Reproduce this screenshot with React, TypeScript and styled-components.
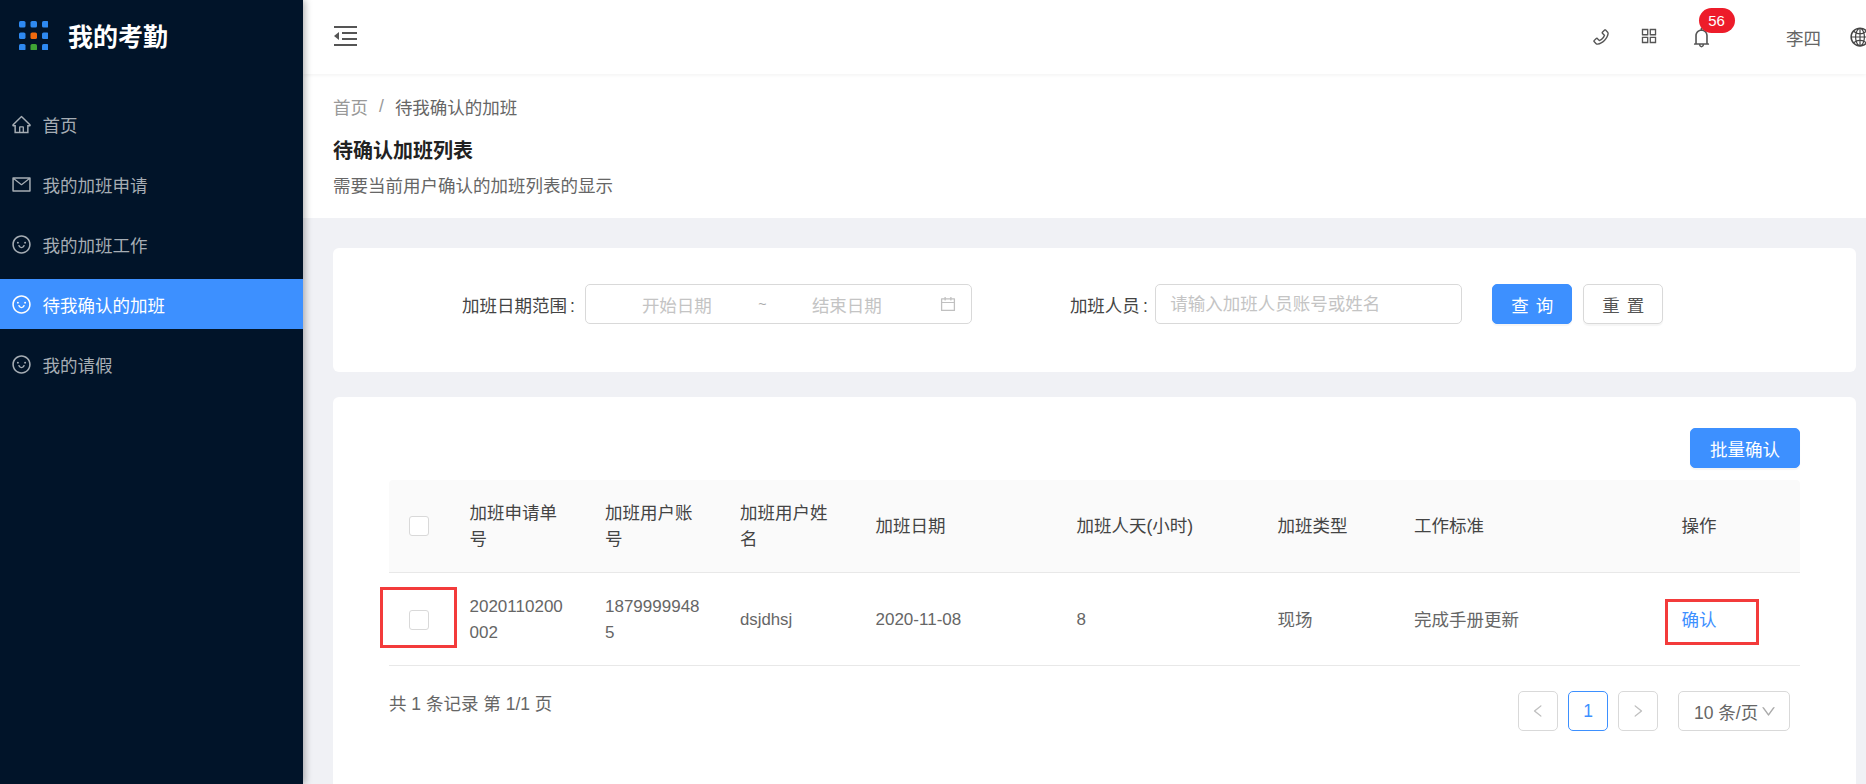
import React from "react";
import styled, { createGlobalStyle } from "styled-components";
import {
  AiOutlineAppstore,
  AiOutlineBell,
  AiOutlineCalendar,
  AiOutlineDown,
  AiOutlineGlobal,
  AiOutlineHome,
  AiOutlineLeft,
  AiOutlineMail,
  AiOutlinePhone,
  AiOutlineRight,
  AiOutlineSmile,
} from "react-icons/ai";

const FONT = `"Liberation Sans", "Noto Sans CJK SC", sans-serif`;
const BLUE = "#3d90ff";

const Global = createGlobalStyle`
  html, body { margin: 0; padding: 0; height: 100%; overflow: hidden; }
  body { font-family: ${FONT}; font-size: 17.5px; color: #666; background: #f0f1f5; }
  * { box-sizing: border-box; }
`;

const Shell = styled.div`
  display: flex;
  width: 1866px;
  height: 784px;
  overflow: hidden;
`;

const Sidebar = styled.aside`
  flex: 0 0 303px;
  background: #011429;
  box-shadow: 2px 0 7px rgba(0, 0, 0, 0.3);
  position: relative;
  z-index: 2;
`;

const Brand = styled.div`
  display: flex;
  align-items: center;
  height: 70px;
  padding-left: 18px;
  gap: 20px;
`;

const BrandTitle = styled.span`
  font-size: 25px;
  font-weight: 700;
  color: #fff;
`;

const Menu = styled.nav`
  display: flex;
  flex-direction: column;
  gap: 10px;
  padding-top: 29px;
`;

const MenuItem = styled.div<{ $active?: boolean }>`
  display: flex;
  align-items: center;
  height: 50px;
  padding-left: 11px;
  gap: 10.5px;
  color: ${(p) => (p.$active ? "#fff" : "#a6adb4")};
  background: ${(p) => (p.$active ? BLUE : "transparent")};
  svg { font-size: 21px; flex: none; }
`;

const Main = styled.main`
  flex: 1;
  min-width: 0;
  display: flex;
  flex-direction: column;
`;

const Header = styled.header`
  flex: 0 0 74px;
  display: flex;
  align-items: center;
  padding-left: 31px;
  background: #fff;
  box-shadow: 0 1px 4px rgba(0, 0, 0, 0.06);
  position: relative;
  z-index: 1;
`;

const Toggle = styled.span`
  display: flex;
  margin-bottom: 3px;
  color: #555;
`;

const HeaderRight = styled.div`
  margin-left: auto;
  margin-right: -5px;
  display: flex;
  align-items: center;
  color: #555;
`;

const HeaderIcon = styled.span<{ $gap: number; $size: number; $lift?: number }>`
  display: flex;
  position: relative;
  font-size: ${(p) => p.$size}px;
  margin-right: ${(p) => p.$gap}px;
  margin-bottom: ${(p) => p.$lift ?? 0}px;
`;

const Badge = styled.span`
  position: absolute;
  left: 8.5px;
  top: -17.5px;
  width: 36px;
  height: 25px;
  border-radius: 13px;
  background: #ed1c2a;
  color: #fff;
  font-size: 15px;
  line-height: 25px;
  text-align: center;
`;

const UserName = styled.span`
  color: #666;
  margin-right: 28px;
`;

const Globe = styled.span`
  display: flex;
  font-size: 22px;
  color: #444;
`;

const PageHead = styled.section`
  flex: 0 0 144px;
  background: #fff;
  padding: 19px 30px 0;
`;

const Crumbs = styled.div`
  display: flex;
  align-items: center;
  height: 26px;
  color: #666;
`;

const CrumbHome = styled.span`
  color: #999;
`;

const CrumbSep = styled.span`
  color: #999;
  margin: 0 11px;
`;

const PageTitle = styled.h1`
  margin: 19px 0 0;
  font-size: 20px;
  line-height: 26px;
  font-weight: 700;
  color: #222;
`;

const PageDesc = styled.p`
  margin: 9px 0 0;
  line-height: 26px;
  color: #666;
`;

const Content = styled.div`
  flex: 1;
  display: flex;
  flex-direction: column;
  gap: 25px;
  padding: 30px 10px 0 30px;
  min-height: 0;
`;

const SearchCard = styled.section`
  flex: 0 0 124px;
  display: flex;
  align-items: center;
  padding: 0 0 12px 129px;
  background: #fff;
  border-radius: 6px;
`;

const Label = styled.label<{ $gapLeft?: number; $gapRight?: number }>`
  color: #444;
  margin-left: ${(p) => p.$gapLeft ?? 0}px;
  margin-right: ${(p) => p.$gapRight ?? 10}px;
  white-space: nowrap;
`;

const Colon = styled.span`
  margin-left: 3px;
`;

const RangeBox = styled.div`
  width: 387px;
  height: 40px;
  border: 1px solid #d9d9d9;
  border-radius: 5px;
  display: flex;
  align-items: center;
  padding-left: 56px;
  color: #c4c4c4;
  position: relative;
  svg { position: absolute; right: 14px; top: 10px; font-size: 18px; color: #c0c0c0; }
`;

const RangeText = styled.span`
  width: 71px;
  white-space: nowrap;
`;

const Tilde = styled.span`
  width: 99px;
  text-align: center;
  font-size: 14px;
  color: #aaa;
`;

const TextBox = styled.div`
  width: 307px;
  height: 40px;
  line-height: 38px;
  border: 1px solid #d9d9d9;
  border-radius: 5px;
  padding-left: 14px;
  color: #c4c4c4;
  white-space: nowrap;
`;

const Button = styled.button<{ $primary?: boolean; $w: number; $ml?: number }>`
  width: ${(p) => p.$w}px;
  height: 40px;
  margin-left: ${(p) => p.$ml ?? 0}px;
  padding: 0;
  font: inherit;
  word-spacing: 2px;
  border-radius: 5px;
  border: 1px solid ${(p) => (p.$primary ? BLUE : "#d9d9d9")};
  background: ${(p) => (p.$primary ? BLUE : "#fff")};
  color: ${(p) => (p.$primary ? "#fff" : "#555")};
  box-shadow: 0 2px 1px rgba(0, 0, 0, 0.04);
`;

const TableCard = styled.section`
  position: relative;
  flex: 1;
  background: #fff;
  border-radius: 6px 6px 0 0;
  padding: 31px 56px 0;
`;

const Toolbar = styled.div`
  display: flex;
  justify-content: flex-end;
  margin-bottom: 12px;
`;

const Table = styled.table`
  width: 100%;
  table-layout: fixed;
  border-collapse: collapse;
`;

const Col = styled.col<{ $w: number }>`
  width: ${(p) => p.$w}px;
`;

const HeadCell = styled.th`
  padding: 20px;
  background: #fafafa;
  border-bottom: 1px solid #e8e8e8;
  font-weight: 400;
  color: #444;
  line-height: 26px;
  text-align: left;
  word-break: break-all;
  &:first-child { border-top-left-radius: 4px; }
  &:last-child { border-top-right-radius: 4px; }
`;

const Cell = styled.td`
  padding: 21px 20px 19px;
  border-bottom: 1px solid #e8e8e8;
  color: #666;
  line-height: 26px;
  word-break: break-all;
`;

const NumCell = styled(Cell)`
  font-size: 17px;
`;

const NameCell = styled(Cell)`
  font-size: 16.8px;
`;

const CheckCell = styled.div`
  display: flex;
  justify-content: center;
`;

const CheckBox = styled.span`
  display: block;
  width: 20px;
  height: 20px;
  background: #fff;
  border: 1px solid #d9d9d9;
  border-radius: 3px;
`;

const ActionLink = styled.a`
  color: ${BLUE};
`;

const Footer = styled.div`
  display: flex;
  align-items: flex-start;
  padding: 25px 10px 0 0;
`;

const Total = styled.span`
  margin-right: auto;
  color: #666;
  line-height: 26px;
`;

const PageBtn = styled.span<{ $current?: boolean }>`
  display: flex;
  align-items: center;
  justify-content: center;
  width: 40px;
  height: 40px;
  margin-left: 10px;
  border: 1px solid ${(p) => (p.$current ? BLUE : "#d9d9d9")};
  border-radius: 5px;
  color: ${(p) => (p.$current ? BLUE : "#c0c0c0")};
  svg { font-size: 16px; }
`;

const PageSize = styled.span`
  display: flex;
  align-items: center;
  width: 112px;
  height: 40px;
  margin-left: 20px;
  padding-left: 15px;
  border: 1px solid #d9d9d9;
  border-radius: 5px;
  color: #666;
  white-space: nowrap;
  svg { font-size: 17px; color: #aaa; margin-left: 2px; }
`;

const Mark = styled.span<{ $l: number; $t: number; $w: number; $h: number }>`
  position: absolute;
  left: ${(p) => p.$l}px;
  top: ${(p) => p.$t}px;
  width: ${(p) => p.$w}px;
  height: ${(p) => p.$h}px;
  border: 3px solid #f33b3b;
  pointer-events: none;
`;

const LogoDots = () => {
  const colors = ["#2e89f0", "#2e89f0", "#2e89f0", "#2e89f0", "#f06a0f", "#2e89f0", "#2e89f0", "#3fa535", "#2e89f0"];
  return (
    <svg width="30" height="30" viewBox="0 0 30 30" aria-hidden="true">
      {colors.map((c, i) => (
        <rect key={i} x={1 + (i % 3) * 11.5} y={Math.floor(i / 3) * 11.5 + 1} width="6.5" height="6.5" rx="1.6" fill={c} />
      ))}
    </svg>
  );
};

const ToggleIcon = () => (
  <svg width="23" height="20" viewBox="0 0 23 20" fill="currentColor" aria-hidden="true">
    <rect x="0" y="0" width="23" height="2" />
    <rect x="8" y="6" width="15" height="2" />
    <rect x="8" y="12" width="15" height="2" />
    <rect x="0" y="18" width="23" height="2" />
    <path d="M0 10 L5 6 V14 Z" />
  </svg>
);

const menu = [
  { icon: <AiOutlineHome />, text: "首页" },
  { icon: <AiOutlineMail />, text: "我的加班申请" },
  { icon: <AiOutlineSmile />, text: "我的加班工作" },
  { icon: <AiOutlineSmile />, text: "待我确认的加班", active: true },
  { icon: <AiOutlineSmile />, text: "我的请假" },
];

const columns = [60.5, 135.5, 135, 135.5, 201, 201, 136.5, 267.5, 138.5];
const heads = ["加班申请单号", "加班用户账号", "加班用户姓名", "加班日期", "加班人天(小时)", "加班类型", "工作标准", "操作"];

export default function App() {
  return (
    <>
      <Global />
      <Shell>
        <Sidebar>
          <Brand>
            <LogoDots />
            <BrandTitle>我的考勤</BrandTitle>
          </Brand>
          <Menu>
            {menu.map((m) => (
              <MenuItem key={m.text} $active={m.active}>
                {m.icon}
                <span>{m.text}</span>
              </MenuItem>
            ))}
          </Menu>
        </Sidebar>
        <Main>
          <Header>
            <Toggle><ToggleIcon /></Toggle>
            <HeaderRight>
              <HeaderIcon $gap={28} $size={20}><AiOutlinePhone /></HeaderIcon>
              <HeaderIcon $gap={31} $size={20} $lift={2}><AiOutlineAppstore /></HeaderIcon>
              <HeaderIcon $gap={73} $size={23}>
                <AiOutlineBell />
                <Badge>56</Badge>
              </HeaderIcon>
              <UserName>李四</UserName>
              <Globe><AiOutlineGlobal /></Globe>
            </HeaderRight>
          </Header>
          <PageHead>
            <Crumbs>
              <CrumbHome>首页</CrumbHome>
              <CrumbSep>/</CrumbSep>
              <span>待我确认的加班</span>
            </Crumbs>
            <PageTitle>待确认加班列表</PageTitle>
            <PageDesc>需要当前用户确认的加班列表的显示</PageDesc>
          </PageHead>
          <Content>
            <SearchCard>
              <Label>加班日期范围<Colon>:</Colon></Label>
              <RangeBox>
                <RangeText>开始日期</RangeText>
                <Tilde>~</Tilde>
                <RangeText>结束日期</RangeText>
                <AiOutlineCalendar />
              </RangeBox>
              <Label $gapLeft={98} $gapRight={7.5}>加班人员<Colon>:</Colon></Label>
              <TextBox>请输入加班人员账号或姓名</TextBox>
              <Button $primary $w={80} $ml={30}>查 询</Button>
              <Button $w={80} $ml={11}>重 置</Button>
            </SearchCard>
            <TableCard>
              <Toolbar>
                <Button $primary $w={110}>批量确认</Button>
              </Toolbar>
              <Table>
                <colgroup>
                  {columns.map((w, i) => <Col key={i} $w={w} />)}
                </colgroup>
                <thead>
                  <tr>
                    <HeadCell><CheckCell><CheckBox /></CheckCell></HeadCell>
                    {heads.map((h) => <HeadCell key={h}>{h}</HeadCell>)}
                  </tr>
                </thead>
                <tbody>
                  <tr>
                    <Cell><CheckCell><CheckBox /></CheckCell></Cell>
                    <NumCell>2020110200002</NumCell>
                    <NumCell>18799999485</NumCell>
                    <NameCell>dsjdhsj</NameCell>
                    <NumCell>2020-11-08</NumCell>
                    <NumCell>8</NumCell>
                    <Cell>现场</Cell>
                    <Cell>完成手册更新</Cell>
                    <Cell><ActionLink>确认</ActionLink></Cell>
                  </tr>
                </tbody>
              </Table>
              <Footer>
                <Total>共 1 条记录 第 1/1 页</Total>
                <PageBtn><AiOutlineLeft /></PageBtn>
                <PageBtn $current>1</PageBtn>
                <PageBtn><AiOutlineRight /></PageBtn>
                <PageSize>10 条/页<AiOutlineDown /></PageSize>
              </Footer>
              <Mark $l={47} $t={190} $w={77} $h={61} />
              <Mark $l={1332} $t={202} $w={94} $h={46} />
            </TableCard>
          </Content>
        </Main>
      </Shell>
    </>
  );
}
